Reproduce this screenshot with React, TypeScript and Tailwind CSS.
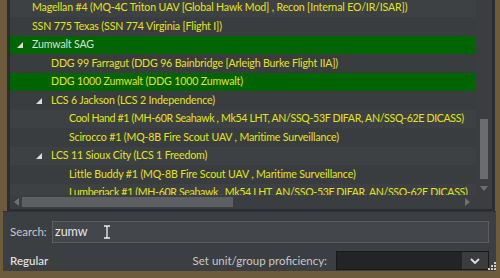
import React from 'react'

interface Row {
  text: string
  level: number
  group?: boolean
  selected?: boolean
  white?: boolean
  tight?: boolean
}

const rows: Row[] = [
  { text: 'Magellan #4 (MQ-4C Triton UAV [Global Hawk Mod] , Recon [Internal EO/IR/ISAR])', level: 0 },
  { text: 'SSN 775 Texas (SSN 774 Virginia [Flight I])', level: 0 },
  { text: 'Zumwalt SAG', level: 0, group: true, selected: true, white: true },
  { text: 'DDG 99 Farragut (DDG 96 Bainbridge [Arleigh Burke Flight IIA])', level: 1 },
  { text: 'DDG 1000 Zumwalt (DDG 1000 Zumwalt)', level: 1, selected: true },
  { text: 'LCS 6 Jackson (LCS 2 Independence)', level: 1, group: true },
  { text: 'Cool Hand #1 (MH-60R Seahawk , Mk54 LHT, AN/SSQ-53F DIFAR, AN/SSQ-62E DICASS)', level: 2, tight: true },
  { text: 'Scirocco #1 (MQ-8B Fire Scout UAV , Maritime Surveillance)', level: 2 },
  { text: 'LCS 11 Sioux City (LCS 1 Freedom)', level: 1, group: true },
  { text: 'Little Buddy #1 (MQ-8B Fire Scout UAV , Maritime Surveillance)', level: 2 },
  { text: 'Lumberjack #1 (MH-60R Seahawk , Mk54 LHT, AN/SSQ-53F DIFAR, AN/SSQ-62E DICASS)', level: 2, tight: true },
]

const indent = ['pl-[22px]', 'pl-[41px]', 'pl-[59px]']

const Expander = () => (
  <svg width="6" height="6" viewBox="0 0 6 6" className="absolute -ml-[15px] mt-[1px]">
    <polygon points="6,0 6,6 0,6" fill="#dcdcdc" />
  </svg>
)

const TreeRow = ({ row, i }: { row: Row; i: number }) => (
  <div
    className={`h-[18.5px] flex items-center whitespace-nowrap ${indent[row.level]} ${
      row.selected ? 'bg-[#006400]' : i % 2 === 0 ? 'bg-[#3e4144]' : 'bg-[#3a3d40]'
    }`}
  >
    <div className="relative flex items-center">
      {row.group && <Expander />}
      <span
        className={`${row.white ? 'text-[#d6e2d0]' : 'text-[#e3e516]'} ${row.tight ? 'tracking-[-0.34px]' : ''}`}
      >
        {row.text}
      </span>
    </div>
  </div>
)

export default function App() {
  return (
    <div
      className="w-[500px] h-[278px] bg-[#6e5b3c] overflow-hidden flex flex-col text-[11.5px]"
      style={{ fontFamily: 'Lato, "Noto Sans", sans-serif' }}
    >
      {/* tree panel */}
      <div className="ml-[7px] mr-[5px] h-[211px] shrink-0 border-x-[3px] border-b-[2px] border-[#2a2c2e] bg-[#3a3d40] flex flex-col">
        <div className="flex flex-1 min-h-0">
          <div className="w-[466px] overflow-hidden text-[10.6px] tracking-[-0.15px]">
            <div className="-mt-[1.25px]">
              {rows.map((r, i) => (
                <TreeRow key={i} row={r} i={i} />
              ))}
            </div>
          </div>
          {/* vertical scrollbar */}
          <div className="w-[16px] bg-[#3b3e41] flex flex-col items-center justify-end pb-[4px]">
            <div className="w-[8px] h-[60px] bg-[#6a6d70] mb-[7px]" />
            <svg width="8" height="5" viewBox="0 0 8 5">
              <polygon points="0,0 8,0 4,5" fill="#6e7174" />
            </svg>
          </div>
        </div>
        {/* horizontal scrollbar */}
        <div className="h-[14px] shrink-0 flex">
          <div className="w-[466px] flex items-center bg-[#3b3e41]">
            <svg width="5" height="8" viewBox="0 0 5 8" className="ml-[4px]">
              <polygon points="5,0 5,8 0,4" fill="#6e7174" />
            </svg>
            <div className="ml-[3px] w-[211px] h-[10px] bg-[#5d6063]" />
            <div className="flex-1" />
            <svg width="5" height="8" viewBox="0 0 5 8" className="mr-[6px]">
              <polygon points="0,0 5,4 0,8" fill="#6e7174" />
            </svg>
          </div>
          <div className="w-[16px] bg-[#3b3e41]" />
        </div>
      </div>

      {/* bottom panel */}
      <div className="ml-[3px] mr-[4px] h-[60px] shrink-0 bg-[#3c3f42] border-t border-[#303234] relative px-[7px] pt-[9px]">
        <div className="flex items-center h-[22px]">
          <span className="w-[42px] text-[#c8c8c8]">Search:</span>
          <div className="flex-1 h-[22px] border border-[#5c5f62] bg-[#43464a] flex items-center px-[2px] relative">
            <span className="text-[#e6e6e6] text-[12.5px]">zumw</span>
            <svg width="8" height="14" viewBox="0 0 8 14" className="absolute left-[50px] top-[3px]">
              <path d="M1 1 H3 Q4 1 4 2 V12 Q4 13 3 13 H1 M7 1 H5 Q4 1 4 2 M4 12 Q4 13 5 13 H7" fill="none" stroke="#f0f0f0" strokeWidth="1.3" />
            </svg>
          </div>
        </div>
        <div className="flex items-center mt-[8px] h-[19px]">
          <span className="text-[#dedede] font-semibold">Regular</span>
          <div className="flex-1" />
          <span className="text-[#c8c8c8] mr-[9px]">Set unit/group proficiency:</span>
          <div className="w-[153px] h-[19px] bg-[#232425] border border-[#1a1a1a] flex">
            <div className="flex-1" />
            <div className="w-[26px] bg-[#3a3c3e] flex items-center justify-center">
              <svg width="10" height="6" viewBox="0 0 10 6">
                <path d="M1 1 L5 5 L9 1" fill="none" stroke="#e0e0e0" strokeWidth="1.8" />
              </svg>
            </div>
          </div>
        </div>
        {/* resize grip */}
        <svg width="8" height="8" viewBox="0 0 8 8" className="absolute right-[0px] bottom-[1px]">
          <rect x="6" y="0" width="2" height="2" fill="#d0d0d0" />
          <rect x="3" y="3" width="2" height="2" fill="#d0d0d0" />
          <rect x="6" y="3" width="2" height="2" fill="#d0d0d0" />
          <rect x="0" y="6" width="2" height="2" fill="#d0d0d0" />
          <rect x="3" y="6" width="2" height="2" fill="#d0d0d0" />
          <rect x="6" y="6" width="2" height="2" fill="#d0d0d0" />
        </svg>
      </div>
    </div>
  )
}
